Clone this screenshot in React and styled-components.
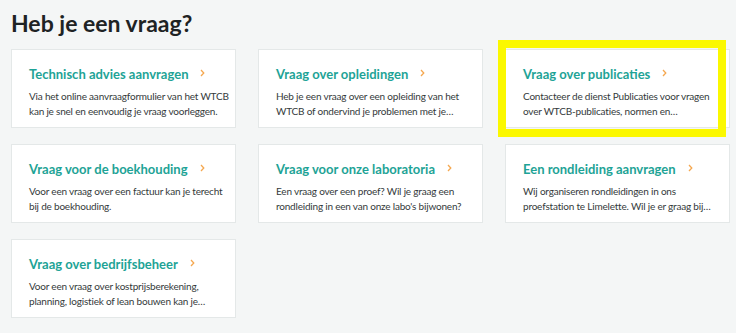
import styled, { createGlobalStyle } from 'styled-components';

const GlobalStyle = createGlobalStyle`
    * { box-sizing: border-box; }
    body {
        margin: 0;
        background: #f4f6f6;
        font-family: Lato, "Liberation Sans", sans-serif;
    }
`;

const items = [
    { title: 'Technisch advies aanvragen', lines: ['Via het online aanvraagformulier van het WTCB', 'kan je snel en eenvoudig je vraag voorleggen.'] },
    { title: 'Vraag over opleidingen', lines: ['Heb je een vraag over een opleiding van het', 'WTCB of ondervind je problemen met je…'] },
    { title: 'Vraag over publicaties', lines: ['Contacteer de dienst Publicaties voor vragen', 'over WTCB-publicaties, normen en…'], highlight: true },
    { title: 'Vraag voor de boekhouding', lines: ['Voor een vraag over een factuur kan je terecht', 'bij de boekhouding.'] },
    { title: 'Vraag voor onze laboratoria', lines: ['Een vraag over een proef? Wil je graag een', "rondleiding in een van onze labo's bijwonen?"] },
    { title: 'Een rondleiding aanvragen', lines: ['Wij organiseren rondleidingen in ons', 'proefstation te Limelette. Wil je er graag bij…'] },
    { title: 'Vraag over bedrijfsbeheer', lines: ['Voor een vraag over kostprijsberekening,', 'planning, logistiek of lean bouwen kan je…'] },
];

export default function App() {
    return (
        <>
            <GlobalStyle />
            <Page>
                <Heading>Heb je een vraag?</Heading>
                <Grid>
                    {items.map(item =>
                        <Card key={item.title} href="#">
                            {item.highlight && <Marker />}
                            <Title>
                                {item.title}
                                <Chevron viewBox="0 0 5 8">
                                    <path d="M1 1 L3.8 4 L1 7" />
                                </Chevron>
                            </Title>
                            {item.lines.map(line => <Line key={line}>{line}</Line>)}
                        </Card>
                    )}
                </Grid>
            </Page>
        </>
    );
}

const Page = styled.div`
    width: 736px;
    height: 333px;
    padding: 6px 7px 0 11px;
    overflow: hidden;
`;
const Heading = styled.h1`
    margin: 0 0 9px;
    font-size: 23px;
    line-height: 34px;
    font-weight: 700;
    color: #1e2324;
`;
const Grid = styled.div`
    display: grid;
    grid-template-columns: repeat(3, 225px);
    column-gap: 22px;
    row-gap: 16px;
`;
const Card = styled.a`
    position: relative;
    display: block;
    height: 79px;
    padding: 15px 8px 0 17px;
    background: #fff;
    border: 1px solid #e4e8e8;
    text-decoration: none;
`;
const Marker = styled.div`
    position: absolute;
    left: -8px;
    top: -10px;
    width: 228px;
    height: 97px;
    border: 8px solid #fbf800;
    pointer-events: none;
`;
const Title = styled.div`
    display: flex;
    align-items: center;
    gap: 12px;
    white-space: nowrap;
    font-size: 13px;
    line-height: 18px;
    font-weight: 700;
    color: #1ea396;
    margin-bottom: 6px;
`;
const Chevron = styled.svg`
    flex: none;
    width: 5px;
    height: 8px;
    margin-top: -3px;
    fill: none;
    stroke: #f5a850;
    stroke-width: 1.3;
`;
const Line = styled.div`
    font-size: 10px;
    line-height: 14.5px;
    letter-spacing: -0.2px;
    white-space: nowrap;
    color: #343a3b;
`;
